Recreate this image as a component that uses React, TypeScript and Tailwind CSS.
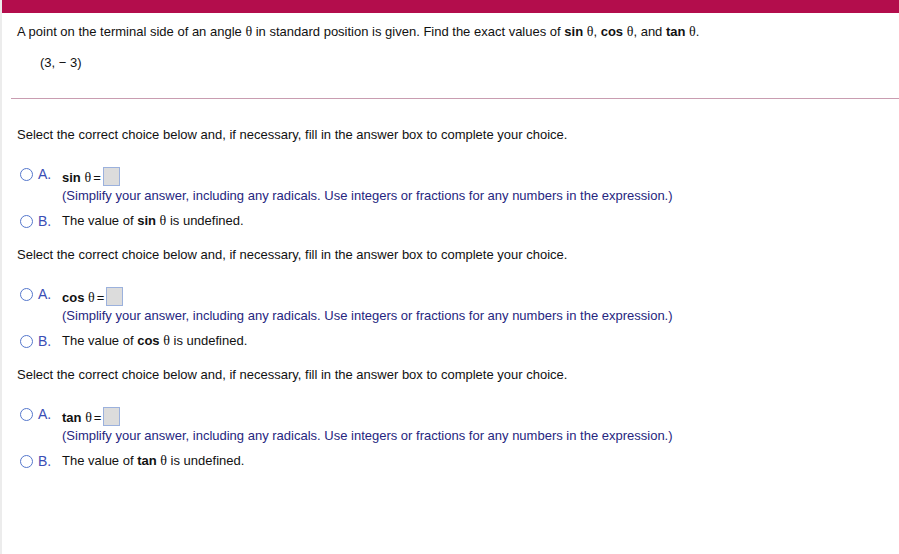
import React from 'react';

const sans = { fontFamily: '"Liberation Sans", Arial, sans-serif' };

function Theta() {
  return <span className="font-['Liberation_Serif',serif] text-[14px] font-normal">θ</span>;
}

function Radio() {
  return <span className="inline-block w-[13px] h-[13px] rounded-full border border-[#5577cc] bg-white" />;
}

function ChoiceBlock({ fn }: { fn: string }) {
  return (
    <div>
      <div className="h-[16px] leading-[16px] text-[13px] text-[#111]">
        Select the correct choice below and, if necessary, fill in the answer box to complete your choice.
      </div>

      <div className="mt-[23px] flex items-start h-[22px]">
        <div className="flex items-center w-[45px] pl-[3px] gap-[5px] h-[16px]">
          <Radio />
          <span className="text-[14px] text-[#3a4db5] leading-[16px]">A.</span>
        </div>
        <div className="flex items-center gap-[2px] mt-[1px]">
          <span className="text-[13px] text-[#111] leading-[16px] pt-[3px]">
            <b>{fn}</b> <Theta />
            <span className="ml-[2px]">=</span>
          </span>
          <span className="inline-block w-[17px] h-[19px] bg-[#dcdcdc] border border-[#9bb1dd]" />
        </div>
      </div>

      <div className="pl-[45px] h-[16px] leading-[16px] text-[13px] text-[#262680]">
        (Simplify your answer, including any radicals. Use integers or fractions for any numbers in the expression.)
      </div>

      <div className="mt-[9px] flex items-center h-[16px]">
        <div className="flex items-center w-[45px] pl-[3px] gap-[5px]">
          <Radio />
          <span className="text-[14px] text-[#3a4db5] leading-[16px]">B.</span>
        </div>
        <span className="text-[13px] text-[#111] leading-[16px]">
          The value of <b>{fn}</b> <Theta /> is undefined.
        </span>
      </div>
    </div>
  );
}

export default function App() {
  return (
    <div className="w-[899px] h-[554px] bg-white border-l-2 border-[#ececec] overflow-hidden" style={sans}>
      <div className="h-[13px] bg-[#b30d4c]" />

      <div className="pl-[15px] mt-[11px] h-[16px] leading-[16px] text-[13px] text-[#111]">
        A point on the terminal side of an angle <Theta /> in standard position is given. Find the exact values of{' '}
        <b>sin</b> <Theta />, <b>cos</b> <Theta />, and <b>tan</b> <Theta />.
      </div>

      <div className="pl-[38px] mt-[15px] h-[16px] leading-[16px] text-[13px] text-[#111]">(3, − 3)</div>

      <div className="ml-[9px] mt-[27px] h-px bg-[#c99db1]" />

      <div className="pl-[15px] mt-[28px] flex flex-col gap-[18px]">
        <ChoiceBlock fn="sin" />
        <ChoiceBlock fn="cos" />
        <ChoiceBlock fn="tan" />
      </div>
    </div>
  );
}
